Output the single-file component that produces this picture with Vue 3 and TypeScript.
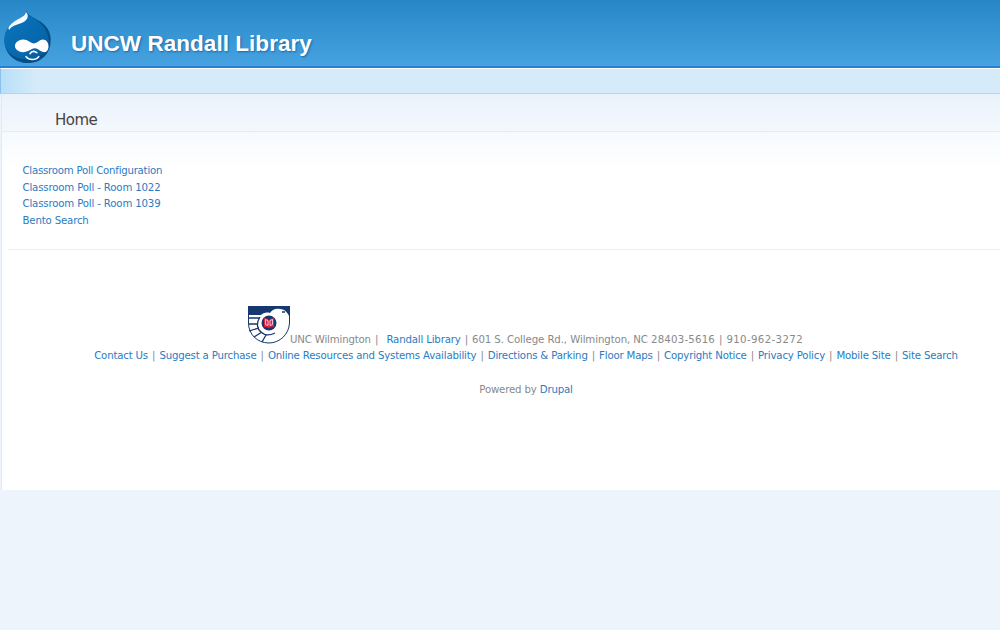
<script setup lang="ts">
const pages: string[] = [
  'Classroom Poll Configuration',
  'Classroom Poll - Room 1022',
  'Classroom Poll - Room 1039',
  'Bento Search',
]
const footerLinks: string[] = [
  'Contact Us',
  'Suggest a Purchase',
  'Online Resources and Systems Availability',
  'Directions & Parking',
  'Floor Maps',
  'Copyright Notice',
  'Privacy Policy',
  'Mobile Site',
  'Site Search',
]
</script>

<template>
  <div class="page">
    <header class="header">
      <svg class="drop" viewBox="0 0 48 54" aria-hidden="true">
        <defs>
          <linearGradient id="dropFill" x1="0" y1="0" x2="1" y2="1">
            <stop offset="0" stop-color="#0c76be" />
            <stop offset=".65" stop-color="#0668ad" />
            <stop offset="1" stop-color="#07589a" />
          </linearGradient>
        </defs>
        <path d="M22 0C24 5 31 7 37 11C45 17 48 24 47 32C46 45 36 53 24 53C10 53 0 43 0 30C0 20 6 13 14 9C19 6 22 4 22 0Z" fill="#064f87" />
        <path d="M22 0C24 5 30 7 35 11C43 18 46 27 45 34C41 47 29 50 19 49C7 47 0 40 0 30C0 20 6 13 14 9C19 6 22 4 22 0Z" fill="url(#dropFill)" />
        <path d="M22 1C25 5 24 8 20 11C15 14 8 14 5 19C2 18 7 12 13 9C18 6 21 5 22 1Z" fill="#f4faff" />
        <path d="M19 29C24 29 27 33 30 33C33 33 36 29 39 29C46 29 47 41 41 42C37 42 34 38 31 38C28 38 24 42 19 42C8 41 8 30 19 29Z" fill="#fff" />
        <path d="M26 43.5C28 40.5 31 40.5 33 42.5M22 46.5C25 50.5 32 50.5 35 46.5" fill="none" stroke="#fff" stroke-width="1.6" stroke-linecap="round" />
      </svg>
      <h1 class="site-name">UNCW Randall Library</h1>
    </header>
    <nav class="navbar" />
    <main class="content">
      <h2 class="title">Home</h2>
      <ul class="pages">
        <li v-for="p in pages" :key="p"><a>{{ p }}</a></li>
      </ul>
      <footer class="footer">
        <div class="address">
          <svg class="seal" viewBox="0 0 42 38" aria-hidden="true">
            <path d="M.5 .5H41.5V17C41 28 32 37 21 37C9 37 .5 28 .5 17Z" fill="#fff" stroke="#17376f" />
            <path d="M0 0H42V12C40 7 37 3 32 3C27 2 24 4 22 7C18 6 15 7 13 9H0Z" fill="#17376f" />
            <path d="M0 12H12M1 18H10M1 25L11 22M6 31L14 26M14 36L18 29M12 11C8 17 9 23 13 26C17 30 23 29 27 27M34 6H37" fill="none" stroke="#17376f" stroke-width="1.3" />
            <circle cx="21" cy="17" r="7.5" fill="#17376f" />
            <path d="M16 12Q19 12 21 14Q23 12 26 12V21Q23 21 21 22Q19 21 16 21Z" fill="#d91f45" />
            <path d="M17.5 13.5L20 14.5V19.5L17.5 18.5ZM24.5 13.5L22 14.5V19.5L24.5 18.5Z" fill="none" stroke="#fff" stroke-width=".7" />
          </svg>
          <span>UNC Wilmington<span class="sep"> |&nbsp; </span><a>Randall Library</a><span class="sep"> | </span><span class="street">601 S. College Rd., Wilmington, NC </span><span class="zip">28403-5616</span><span class="sep"> | </span><span class="phone">910-962-3272</span></span>
        </div>
        <div class="links">
          <template v-for="(l, i) in footerLinks" :key="l"><span v-if="i" class="sep"> | </span><a>{{ l }}</a></template>
        </div>
        <div class="powered">Powered by <a>Drupal</a></div>
      </footer>
    </main>
  </div>
</template>

<style>
body {
  background: #edf4fb;
}
</style>

<style scoped>
.page {
  height: 630px;
  overflow: hidden;
  font: 10.2px/16.5px "DejaVu Sans", sans-serif;
  letter-spacing: -0.17px;
  color: #898989;
}
a {
  color: #2b7bc3;
}
.header {
  box-sizing: border-box;
  height: 68px;
  display: flex;
  padding: 11px 0 0 4px;
  background: linear-gradient(#2787c6, #46a2e1 65px);
  border-bottom: 2px solid #297fd3;
}
.drop {
  width: 48px;
  height: 53px;
}
.site-name {
  margin: 18px 0 0 19px;
  font: bold 22.5px/30px "Liberation Sans", Arial, sans-serif;
  letter-spacing: 0.04px;
  color: #fff;
  text-shadow: 1px 1px 2px #1768a8;
  white-space: nowrap;
}
.navbar {
  box-sizing: border-box;
  height: 26px;
  border-top: 1px solid #fff;
  border-left: 1px solid #8ac1ea;
  border-bottom: 1px solid #b5d5ee;
  background: linear-gradient(90deg, #b8dff8, #d5ebfa 36px);
}
.content {
  box-sizing: border-box;
  height: 396px;
  margin-left: 1px;
  border-left: 1px solid #dcebf5;
  background: linear-gradient(#e9f2fb, #f4f8fd 37px, #f6fafd 38px, #fff 75px);
}
.title {
  box-sizing: border-box;
  height: 38px;
  margin: 0;
  padding: 16px 0 0 53px;
  border-bottom: 1px solid #e3edf4;
  font: 15px/20px "DejaVu Sans", sans-serif;
  letter-spacing: -0.5px;
  color: #444;
}
.pages {
  list-style: none;
  margin: 0 0 0 6px;
  padding: 31px 0 20px 14.5px;
  height: 66px;
  border-bottom: 1px solid #e8f0f4;
}
.pages li:first-child {
  letter-spacing: -0.24px;
}
.footer {
  padding-top: 56px;
  width: 1048px;
  text-align: center;
  white-space: nowrap;
}
.address {
  display: flex;
  justify-content: center;
  align-items: flex-end;
  height: 42px;
}
.seal {
  width: 42px;
  height: 38px;
  margin: 0 0 4px -1px;
}
.sep {
  word-spacing: 1px;
}
.street {
  letter-spacing: -0.1px;
}
.zip {
  letter-spacing: 0.2px;
}
.phone {
  letter-spacing: 0.37px;
}
.links {
  letter-spacing: -0.18px;
}
.powered {
  margin-top: 17px;
}
</style>
